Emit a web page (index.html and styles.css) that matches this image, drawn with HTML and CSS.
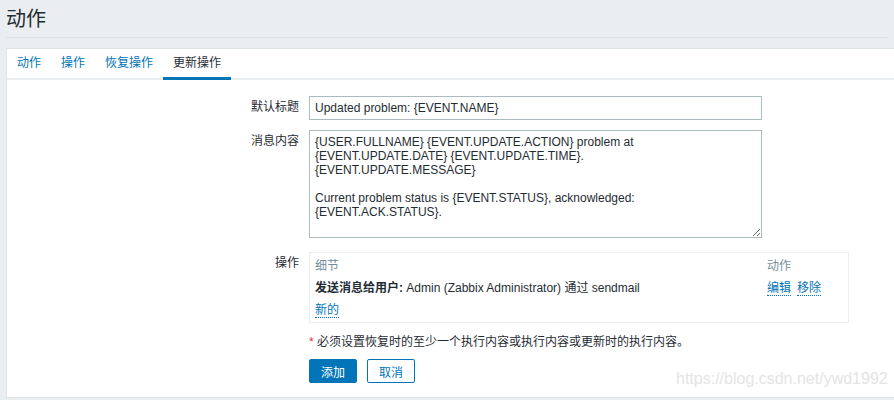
FILE: index.html
```html
<!DOCTYPE html>
<html lang="zh">
<head>
<meta charset="utf-8">
<link rel="stylesheet" href="styles.css">
</head>
<body>
<header class="page-header">
  <h1 class="page-title">动作</h1>
</header>
<main class="panel">
  <nav class="tabs">
    <a class="tab">动作</a>
    <a class="tab">操作</a>
    <a class="tab">恢复操作</a>
    <a class="tab tab-active">更新操作</a>
  </nav>
  <form class="form">
    <div class="row">
      <label class="label">默认标题</label>
      <div class="field"><input class="input" type="text" value="Updated problem: {EVENT.NAME}"></div>
    </div>
    <div class="row">
      <label class="label">消息内容</label>
      <div class="field"><textarea class="textarea">{USER.FULLNAME} {EVENT.UPDATE.ACTION} problem at
{EVENT.UPDATE.DATE} {EVENT.UPDATE.TIME}.
{EVENT.UPDATE.MESSAGE}

Current problem status is {EVENT.STATUS}, acknowledged:
{EVENT.ACK.STATUS}.</textarea></div>
    </div>
    <div class="row row-ops">
      <label class="label">操作</label>
      <div class="field">
        <div class="ops">
          <div class="ops-line ops-head">
            <span class="ops-detail">细节</span>
            <span class="ops-actions">动作</span>
          </div>
          <div class="ops-line">
            <span class="ops-detail"><b class="strong">发送消息给用户:</b> Admin (Zabbix Administrator) 通过 sendmail</span>
            <span class="ops-actions"><a class="link link-gap">编辑</a><a class="link">移除</a></span>
          </div>
          <div class="ops-line">
            <span class="ops-detail"><a class="link">新的</a></span>
          </div>
        </div>
      </div>
    </div>
    <div class="row row-note">
      <span class="label"></span>
      <div class="field note"><span class="star">*</span> 必须设置恢复时的至少一个执行内容或执行内容或更新时的执行内容。</div>
    </div>
    <div class="row row-buttons">
      <span class="label"></span>
      <div class="field buttons">
        <button type="button" class="btn btn-primary">添加</button>
        <button type="button" class="btn btn-alt">取消</button>
      </div>
    </div>
  </form>
  <div class="watermark">https://blog.csdn.net/ywd1992</div>
</main>
</body>
</html>
```

FILE: styles.css
```css
* { box-sizing: border-box; }
html, body {
  margin: 0;
  padding: 0;
  background: #ebeef0;
  font-family: "Liberation Sans", Arial, "Noto Sans CJK SC", sans-serif;
  font-size: 12px;
  color: #1f2c33;
  overflow: hidden;
}
.page-header {
  height: 38px;
  border-bottom: 1px solid #dde2e5;
  margin: 0 6px 0 6px;
  display: flex;
  align-items: center;
}
.page-title {
  margin: 0;
  font-size: 20px;
  font-weight: normal;
  color: #1f2c33;
  line-height: 24px;
}
.panel {
  position: relative;
  margin: 10px -4px 0 6px;
  background: #fff;
  border: 1px solid #dfe4e7;
  height: 350px;
}
.tabs {
  display: flex;
  height: 31px;
  border-bottom: 2px solid #ebeef0;
  padding-left: 0;
}
.tab {
  display: block;
  padding: 0 10px;
  line-height: 29px;
  color: #0275b8;
  text-decoration: none;
}
.tab-active {
  color: #1f2c33;
  border-bottom: 3px solid #0275b8;
  margin-bottom: -2px;
  line-height: 29px;
}
.form {
  padding-top: 16px;
}
.row {
  display: grid;
  grid-template-columns: 292px 1fr;
  column-gap: 10px;
  margin-bottom: 10px;
}
.row-ops { margin-top: 14px; margin-bottom: 0; }
.row-note { margin-top: 12px; margin-bottom: 0; }
.row-buttons { margin-top: 10px; }
.label {
  text-align: right;
  line-height: 23px;
}
.field { min-width: 0; }
.input {
  display: block;
  width: 453px;
  height: 24px;
  border: 1px solid #acbbc2;
  padding: 0 5px;
  font: inherit;
  color: #1f2c33;
  background: #fff;
  border-radius: 0;
  outline: none;
}
.textarea {
  display: block;
  width: 453px;
  height: 108px;
  border: 1px solid #acbbc2;
  padding: 4px 5px;
  font: inherit;
  line-height: 14px;
  color: #1f2c33;
  resize: both;
  overflow: hidden;
  border-radius: 0;
  outline: none;
}
.ops {
  width: 540px;
  height: 71px;
  border: 1px solid #ebeef0;
  padding: 2px 5px 0 5px;
}
.ops-line {
  display: flex;
  line-height: 22px;
  height: 22px;
}
.ops-head { color: #768d99; }
.ops-detail { flex: 1; }
.ops-actions {
  width: 76px;
  display: block;
}
.strong { font-weight: bold; }
.link {
  color: #0275b8;
  text-decoration: none;
  border-bottom: 1px dotted #0275b8;
}
.link-gap { margin-right: 6px; }
.note { line-height: 14px; }
.star { color: #e33734; }
.buttons {
  display: flex;
  gap: 10px;
}
.btn {
  height: 24px;
  width: 48px;
  padding: 0;
  font: inherit;
  border-radius: 2px;
  cursor: pointer;
}
.btn-primary {
  background: #0275b8;
  border: 1px solid #0275b8;
  color: #fff;
}
.btn-alt {
  background: #fff;
  border: 1px solid #0275b8;
  color: #0275b8;
}
.watermark {
  position: absolute;
  left: 669px;
  top: 321px;
  font-size: 16px;
  color: #e4e4e4;
  font-family: "Liberation Sans", Arial, sans-serif;
}
```
